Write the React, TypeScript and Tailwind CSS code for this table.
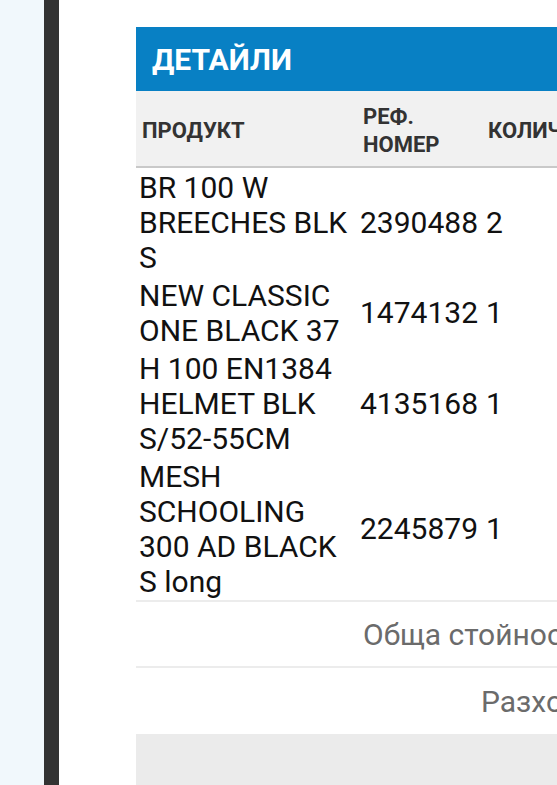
const rows = [
  { name: "BR 100 W BREECHES BLK S", ref: "2390488", qty: "2" },
  { name: "NEW CLASSIC ONE BLACK 37", ref: "1474132", qty: "1" },
  { name: "H 100 EN1384 HELMET BLK S/52-55CM", ref: "4135168", qty: "1" },
  { name: "MESH SCHOOLING 300 AD BLACK S long", ref: "2245879", qty: "1" },
];

export default function App() {
  return (
    <div className="flex h-[785px] w-[557px] overflow-hidden bg-white font-['Roboto',sans-serif]">
      <div className="w-[44px] shrink-0 bg-[#f1f8fc]" />
      <div className="w-[15px] shrink-0 bg-[#333333]" />
      <div className="flex-1 overflow-hidden pl-[77px] pt-[27px]">
        <div className="w-[640px]">
          <div className="flex h-[64px] items-center bg-[#0880c4] px-4">
            <h2 className="text-[30px] font-bold text-white">ДЕТАЙЛИ</h2>
          </div>
          <table className="w-full table-fixed border-collapse">
            <colgroup>
              <col className="w-[221px]" />
              <col className="w-[126px]" />
              <col />
            </colgroup>
            <thead>
              <tr className="h-[76px] border-b-2 border-[#c9c9c9] bg-[#f1f1f1] text-left text-[22px] font-bold leading-[28px] text-[#333]">
                <th className="px-[6px] pt-[5px]">ПРОДУКТ</th>
                <th className="px-[6px] pt-[5px]">
                  РЕФ.
                  <br />
                  НОМЕР
                </th>
                <th className="whitespace-nowrap px-[5px] pt-[5px]">КОЛИЧЕСТВО</th>
              </tr>
            </thead>
            <tbody className="text-[30px] leading-[35px] text-[#111]">
              {rows.map((r) => (
                <tr key={r.ref} className="last:border-b-2 last:border-[#ececec]">
                  <td className="px-[3px] py-[1.5px] align-middle">{r.name}</td>
                  <td className="px-[3px] py-[1.5px] align-middle">{r.ref}</td>
                  <td className="px-[3px] py-[1.5px] align-middle">{r.qty}</td>
                </tr>
              ))}
            </tbody>
          </table>
          <div className="flex h-[66px] items-center whitespace-nowrap border-b-2 border-[#ececec] pl-[227px] text-[30px] text-[#6b6b6b]">
            Обща стойност на поръчката
          </div>
          <div className="flex h-[66px] items-center whitespace-nowrap pl-[345px] text-[30px] text-[#6b6b6b]">
            Разходи за доставка
          </div>
          <div className="h-[60px] bg-[#ebebeb]" />
        </div>
      </div>
    </div>
  );
}
